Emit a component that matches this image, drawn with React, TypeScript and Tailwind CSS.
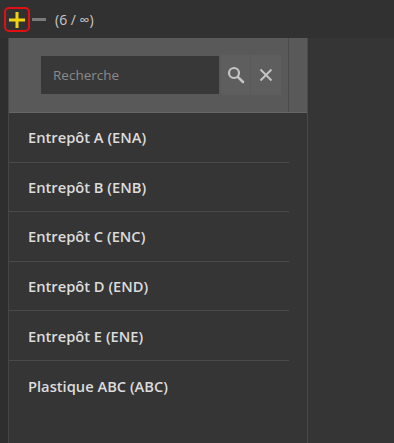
import React from "react";

const items = [
  "Entrepôt A (ENA)",
  "Entrepôt B (ENB)",
  "Entrepôt C (ENC)",
  "Entrepôt D (END)",
  "Entrepôt E (ENE)",
  "Plastique ABC (ABC)",
];

export default function App() {
  return (
    <div className="w-[394px] h-[443px] bg-[#353535] font-['Open_Sans',sans-serif] overflow-hidden flex flex-col">
      <div className="h-[38px] bg-[#313131] flex items-center pl-[4px]">
        <div className="w-[26px] h-[25px] border-2 border-[#e01010] rounded-[5px] flex items-center justify-center mt-[1px]">
          <svg width="16" height="16" viewBox="0 0 16 16">
            <rect x="6.5" y="0" width="3" height="16" fill="#f2d50f" />
            <rect x="0" y="6.5" width="16" height="3" fill="#f2d50f" />
          </svg>
        </div>
        <div className="w-[14px] h-[3px] bg-[#7a7a7a] ml-[2px]" />
        <span className="ml-[9px] text-[14px] text-[#c8c8c8]">(6 / ∞)</span>
      </div>
      <div className="flex flex-1">
        <div className="w-[9px] bg-[#2e2e2e] border-r border-[#464646]" />
        <div className="w-[299px] flex flex-col border-r border-[#4a4a4a]">
          <div className="h-[75px] bg-[#595959] flex border-b border-[#666]">
            <div className="w-[280px] flex items-center pl-[32px] border-r border-[#4b4b4b]">
              <div className="w-[178px] h-[38px] bg-[#383838] flex items-center pl-[12px] text-[13.5px] text-[#8a8a8a]">
                Recherche
              </div>
              <div className="w-[29px] h-[40px] ml-[2px] bg-[#5e5e5e] flex items-center justify-center">
                <svg width="18" height="18" viewBox="0 0 18 18" fill="none">
                  <circle cx="7" cy="7" r="5" stroke="#c4c4c4" strokeWidth="2.2" />
                  <line x1="10.8" y1="10.8" x2="16" y2="16" stroke="#c4c4c4" strokeWidth="2.6" strokeLinecap="round" />
                </svg>
              </div>
              <div className="w-[30px] h-[40px] ml-[1px] bg-[#5e5e5e] flex items-center justify-center">
                <svg width="14" height="14" viewBox="0 0 14 14" fill="none">
                  <line x1="1.5" y1="1.5" x2="12.5" y2="12.5" stroke="#c4c4c4" strokeWidth="2" />
                  <line x1="12.5" y1="1.5" x2="1.5" y2="12.5" stroke="#c4c4c4" strokeWidth="2" />
                </svg>
              </div>
            </div>
            <div className="flex-1" />
          </div>
          <div className="w-[280px] flex flex-col">
            {items.map((t, i) => (
              <div
                key={t}
                className={
                  "h-[49.6px] flex items-center pl-[19px] text-[14.7px] font-semibold text-[#dcdcdc] " +
                  (i < items.length - 1 ? "border-b border-[#4a4a4a]" : "")
                }
              >
                {t}
              </div>
            ))}
          </div>
        </div>
        <div className="flex-1" />
      </div>
    </div>
  );
}
